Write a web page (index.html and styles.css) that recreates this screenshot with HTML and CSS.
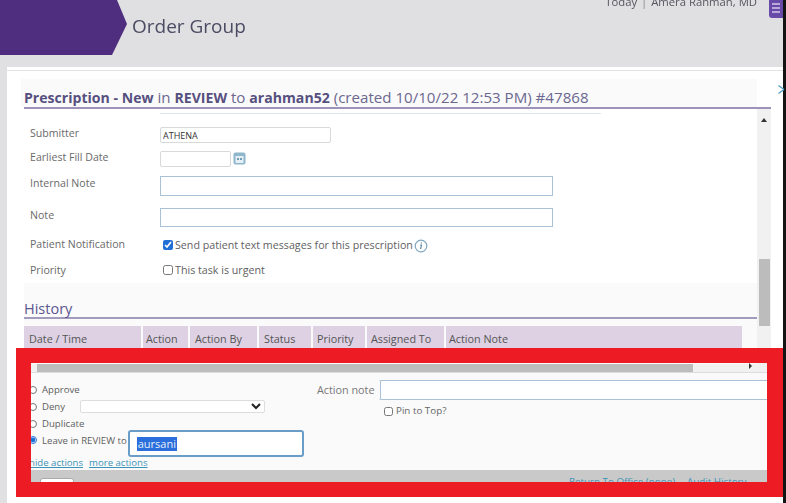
FILE: index.html
```html
<!DOCTYPE html>
<html lang="en">
<head>
<meta charset="utf-8">
<title>Order Group</title>
<link rel="stylesheet" href="styles.css">
</head>
<body>
<div class="app">
  <div class="main">
    <header class="topbar">
      <svg class="chevron" width="128" height="55" viewBox="0 0 128 55"><polygon points="0,0 117,0 127,24 112,55 0,55" fill="#4f2d7f"/></svg>
      <h1 class="page-title">Order Group</h1>
      <div class="user">Today <span class="sep">|</span> Amera Rahman, MD</div>
      <div class="menu-btn"><i></i><i></i><i></i></div>
    </header>
    <section class="sheet">
      <div class="task-head">
        <h2 class="task-title"><b>Prescription - New</b> in <b>REVIEW</b> to <b>arahman52</b> (created 10/10/22 12:53 PM) #47868</h2>
      </div>
      <div class="scroll-area">
        <div class="content">
          <div class="form-wrap">
            <div class="blue-rule"></div>
            <div class="field f1"><label class="lbl">Submitter</label><input class="txt submit" value="ATHENA"></div>
            <div class="field f2"><label class="lbl">Earliest Fill Date</label><input class="txt date">
              <svg class="cal" width="13" height="13" viewBox="0 0 13 13"><rect x="0.5" y="0.5" width="12" height="12" rx="2" fill="#8fb6ca"/><rect x="2.5" y="4" width="8" height="7" fill="#e4f0f5"/><rect x="4" y="6" width="2" height="2" fill="#6f9db5"/><rect x="7" y="6" width="2" height="2" fill="#6f9db5"/></svg>
            </div>
            <div class="field f3"><label class="lbl">Internal Note</label><input class="txt wide h20"></div>
            <div class="field f4"><label class="lbl">Note</label><input class="txt wide h19"></div>
            <div class="field f5"><label class="lbl">Patient Notification</label>
              <span class="check"><input type="checkbox" checked><span>Send patient text messages for this prescription</span></span>
              <svg class="info" width="14" height="14" viewBox="0 0 14 14"><circle cx="7" cy="7" r="5.8" fill="none" stroke="#7fa8c0" stroke-width="1.2"/><path d="M7.4 3.6v.9M6.2 6h1.2l-.8 4.2" fill="none" stroke="#4a7fa0" stroke-width="1.1"/></svg>
            </div>
            <div class="field f6"><label class="lbl">Priority</label>
              <span class="check"><input type="checkbox"><span>This task is urgent</span></span>
            </div>
          </div>
          <div class="history">
            <h3 class="history-title">History</h3>
            <div class="history-head">
              <div class="th c1">Date / Time</div>
              <div class="th c2">Action</div>
              <div class="th c3">Action By</div>
              <div class="th c4">Status</div>
              <div class="th c5">Priority</div>
              <div class="th c6">Assigned To</div>
              <div class="th c7">Action Note</div>
            </div>
          </div>
        </div>
        <div class="vscroll"><span class="up"></span><div class="thumb"></div></div>
      </div>
      <div class="hscroll"><div class="hthumb"></div><span class="right"></span></div>
      <div class="actions">
        <div class="act-left">
          <div class="radio-row"><input type="radio" name="a"><span>Approve</span></div>
          <div class="radio-row"><input type="radio" name="a"><span>Deny</span><select class="deny"></select></div>
          <div class="radio-row"><input type="radio" name="a"><span>Duplicate</span></div>
          <div class="radio-row leave"><input type="radio" name="a" checked><span>Leave in REVIEW to</span>
            <div class="assign"><span class="selected">aursani</span></div>
          </div>
          <div class="links"><a href="#">hide actions</a><a href="#">more actions</a></div>
        </div>
        <div class="act-right">
          <div class="note-row"><span class="note-lbl">Action note</span><input class="txt note-input"></div>
          <label class="pin"><input type="checkbox"><span>Pin to Top?</span></label>
        </div>
      </div>
      <div class="footer">
        <button class="btn" type="button">Save</button>
        <a href="#" class="foot-link first">Return To Office (none)</a>
        <a href="#" class="foot-link">Audit History</a>
      </div>
    </section>
  </div>
  <div class="edge"></div>
  <div class="highlight"></div>
  <svg class="close" width="7" height="9" viewBox="0 0 7 9"><path d="M0.5 0.5l5.5 4M0.5 8.5l5.5-4" stroke="#4f9fc4" stroke-width="1.3" fill="none"/></svg>
</div>
</body>
</html>
```
FILE: styles.css
```css
* { box-sizing: border-box; }
html, body { margin: 0; padding: 0; height: 100%; overflow: hidden; background: #fff; }
body { font-family: "Open Sans", "Noto Sans", sans-serif; color: #666; }
.app { position: relative; display: flex; width: 786px; height: 503px; overflow: hidden; background: #fff; }
.main { width: 783px; height: 503px; display: flex; flex-direction: column; background: #e0e0e2; filter: blur(0.45px); }
.edge { width: 3px; background: #141414; }

.topbar { position: relative; display: flex; align-items: flex-start; height: 67px; flex: none; }
.chevron { flex: none; display: block; }
.page-title { margin: 13px 0 0 4px; font-size: 19px; line-height: 26px; font-weight: 400; color: #4b4b63; }
.user { margin: -5px 0 0 auto; font-size: 11.3px; line-height: 14px; color: #55555f; padding-right: 12px; white-space: nowrap; }
.sep { margin: 0 1px; color: #888; }
.menu-btn { width: 14px; height: 18px; background: #6a4aa8; border-radius: 0 0 0 3px; display: flex; flex-direction: column; gap: 2px; padding: 3px 3px 0 3px; }
.menu-btn i { display: block; height: 2px; background: #b9a8dc; }

.sheet { flex: 1; min-height: 0; margin-left: 7px; background: #fff; border-top: 3px solid #fff; box-shadow: inset 0 1px 0 #e2e2e2; overflow: hidden; padding: 9px 0 0 14px; display: flex; flex-direction: column; }
.task-head { width: 736px; height: 28px; background: #fafafa; padding-left: 3px; flex: none; }
.task-title { margin: 0; width: 747px; height: 30px; padding-top: 9px; font-size: 15.1px; line-height: 19px; font-weight: 400; color: #6b6790; border-bottom: 2px solid #9d93ba; white-space: nowrap; }
.task-title b { font-size: 14.1px; font-weight: 700; color: #56507f; }

.scroll-area { display: flex; margin: 2px 0 0 3px; height: 255px; flex: none; }
.content { width: 733px; height: 255px; overflow: hidden; background: #fafafa; }
.form-wrap { position: relative; height: 174px; background: #fff; padding-top: 18px; }
.blue-rule { position: absolute; left: 136px; top: 4px; width: 441px; height: 1px; background: #dbe6f0; }
.field { display: flex; align-items: flex-start; }
.f2 { margin-top: 8px; }
.f3 { margin-top: 9px; }
.f4 { margin-top: 12px; }
.f5 { margin-top: 10px; align-items: center; }
.f6 { margin-top: 10px; align-items: center; }
.lbl { width: 136px; flex: none; padding-left: 6px; font-size: 10.6px; line-height: 13px; color: #6a6a6a; }
.f3 .lbl, .f4 .lbl { margin-top: 1px; }
.f5 .lbl { margin-top: -1px; }
.txt { display: block; padding: 0 2px; border: 1px solid #d9d9d9; border-radius: 2px; background: #fff; font-family: inherit; font-size: 9px; color: #333; outline: 0; }
.submit { width: 171px; height: 16px; }
.date { width: 71px; height: 16px; }
.cal { margin: 1px 0 0 2px; }
.wide { width: 393px; border: 1px solid #a9c2d8; border-radius: 0; }
.h20 { height: 20px; }
.h19 { height: 19px; }
.check { display: flex; align-items: center; font-size: 10.7px; line-height: 14px; color: #5f5f5f; padding-left: 3px; white-space: nowrap; }
.check input { margin: 0 2px 0 0; width: 10px; height: 10px; accent-color: #1f6fd6; }
.info { margin: 2px 0 0 1px; }

.history { padding-top: 17px; }
.history-title { margin: 0; height: 19px; font-size: 14.5px; line-height: 18px; font-weight: 400; color: #5b5690; border-bottom: 2px solid #a39bbd; }
.history-head { display: flex; gap: 2px; margin-top: 7px; height: 30px; }
.th { background: #ddd1e3; font-size: 10.8px; line-height: 25px; color: #555; padding-left: 5px; height: 30px; white-space: nowrap; }
.c1 { width: 117px; }
.c2 { width: 45px; padding-left: 3px; }
.c3 { width: 67px; }
.c4 { width: 52px; }
.c5 { width: 52px; padding-left: 4px; }
.c6 { width: 77px; padding-left: 4px; }
.c7 { width: 296px; padding-left: 3px; }

.vscroll { position: relative; width: 14px; height: 255px; background: #f1f1f1; padding: 150px 1px 0 2px; }
.up { position: absolute; left: 4px; top: 9px; border: 3px solid transparent; border-top: 0; border-bottom: 4px solid #333; }
.thumb { width: 11px; height: 67px; background: #bcbcbc; }

.hscroll { position: relative; width: 747px; height: 9px; margin-left: 3px; background: #f1f1f1; padding: 0 0 0 13px; flex: none; border-bottom: 1px solid #ddd; }
.hthumb { width: 656px; height: 8px; background: #bdbdbd; }
.right { position: absolute; left: 725px; top: -1px; border: 3px solid transparent; border-right: 0; border-left: 3px solid #333; }

.actions { display: flex; height: 97px; flex: none; padding-left: 8px; background: #fafafa; }
.act-left { width: 288px; padding-top: 8px; }
.radio-row { display: flex; align-items: center; height: 17px; font-size: 9.6px; color: #5f5f5f; white-space: nowrap; }
.radio-row input { margin: 0 5px 0 0; width: 8px; height: 8px; accent-color: #1f6fd6; flex: none; }
.deny { width: 185px; height: 13px; margin-left: 15px; background: #fff; border: 1px solid #ddd; border-radius: 2px; font-size: 8px; color: #222; }
.leave { height: 27px; margin-top: -2px; align-items: flex-start; }
.leave > input { margin-top: 6px; }
.leave > span { line-height: 13px; margin-top: 4px; }
.assign { width: 176px; height: 27px; margin-left: 1px; border: 2px solid #6a9cc8; border-radius: 3px; background: #fff; padding: 5px 0 0 7px; font-size: 11px; line-height: 14px; }
.selected { display: inline-block; background: #2a6fdb; color: #e6eefc; padding: 0 1px; }
.links { display: flex; gap: 6px; font-size: 9.6px; line-height: 12px; }
.links a, .foot-link { color: #3c93b8; }
.links a { text-decoration: underline; }
.act-right { flex: 1; min-width: 0; }
.note-row { display: flex; align-items: center; height: 20px; margin: 7px 0 0 62px; background: #fff; border-top: 1px solid #d5e0ea; border-bottom: 1px solid #d5e0ea; }
.note-lbl { margin-left: -62px; width: 63px; flex: none; font-size: 10.8px; color: #777; white-space: nowrap; background: #fafafa; height: 18px; line-height: 18px; }
.note-input { flex: 1; min-width: 0; height: 20px; border: 1px solid #a9c2d8; border-width: 1px 0 1px 1px; border-radius: 2px 0 0 2px; }
.pin { display: flex; align-items: center; margin: 4px 0 0 67px; font-size: 9.8px; line-height: 14px; color: #666; }
.pin input { margin: 0 3px 0 0; width: 9px; height: 9px; }

.footer { display: flex; align-items: flex-start; height: 27px; flex: none; padding-left: 19px; background: #c9c9c9; font-size: 9.8px; overflow: hidden; }
.btn { width: 34px; height: 24px; flex: none; margin-top: 8px; padding: 0; border: 1px solid #aaa; border-radius: 3px; background: #fff; font-family: inherit; font-size: 9px; color: #666; }
.foot-link { margin-top: 5px; text-decoration: none; white-space: nowrap; }
.foot-link.first { margin-left: 495px; margin-right: 12px; }

.highlight { position: absolute; left: 16px; top: 348px; bottom: 6px; width: 767px; border: solid #ed1c24; border-width: 15px 16px 15px 15px; }
.close { position: absolute; left: 778px; top: 85px; }
```
